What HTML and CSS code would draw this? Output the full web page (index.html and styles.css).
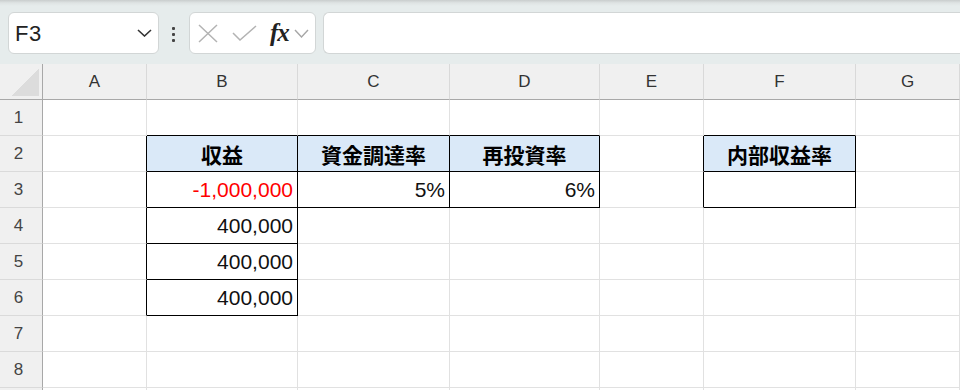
FILE: index.html
```
<!DOCTYPE html>
<html lang="ja">
<head>
    <meta charset="UTF-8">
    <title>内部収益率</title>
    <link rel="stylesheet" href="styles.css">
</head>
<body>
    <!-- Formula bar -->
    <div class="toolbar">
        <div class="namebox">
            <span class="name">F3</span>
            <svg class="chev" width="15" height="8" viewBox="0 0 15 8"><polyline points="1,1 7.5,7 14,1" fill="none" stroke="#333" stroke-width="1.6"/></svg>
        </div>
        <div class="dots"><i></i><i></i><i></i></div>
        <div class="fxbox">
            <svg width="20" height="19" viewBox="0 0 20 19"><path d="M1 1 L19 18 M19 1 L1 18" stroke="#b3b3b3" stroke-width="1.5" fill="none"/></svg>
            <svg class="ok" width="25" height="16" viewBox="0 0 25 16"><polyline points="1,8 8,15 24,1" stroke="#b3b3b3" stroke-width="1.5" fill="none"/></svg>
            <span class="fx">fx</span>
            <svg width="15" height="9" viewBox="0 0 15 9"><polyline points="1,1 7.5,8 14,1" fill="none" stroke="#a6a6a6" stroke-width="1.4"/></svg>
        </div>
        <div class="formula"></div>
    </div>

    <!-- Sheet -->
    <table class="sheet">
        <thead>
            <tr>
                <th class="corner"><span class="tri"></span></th>
                <th class="w-a">A</th>
                <th class="w-b">B</th>
                <th class="w-c">C</th>
                <th class="w-d">D</th>
                <th class="w-e">E</th>
                <th class="w-f">F</th>
                <th class="w-g">G</th>
            </tr>
        </thead>
        <tbody>
            <tr>
                <td class="rh">1</td>
                <td></td><td class="kb"></td><td class="kb"></td><td class="kb"></td><td></td><td class="kb"></td><td></td>
            </tr>
            <tr>
                <td class="rh">2</td>
                <td class="kr"></td>
                <td class="k head">収益</td>
                <td class="k head">資金調達率</td>
                <td class="k head">再投資率</td>
                <td class="kr"></td>
                <td class="k head">内部収益率</td>
                <td></td>
            </tr>
            <tr>
                <td class="rh">3</td>
                <td class="kr"></td>
                <td class="k num neg">-1,000,000</td>
                <td class="k num">5%</td>
                <td class="k num">6%</td>
                <td class="kr"></td>
                <td class="k"></td>
                <td></td>
            </tr>
            <tr>
                <td class="rh">4</td>
                <td class="kr"></td><td class="k num">400,000</td><td></td><td></td><td></td><td></td><td></td>
            </tr>
            <tr>
                <td class="rh">5</td>
                <td class="kr"></td><td class="k num">400,000</td><td></td><td></td><td></td><td></td><td></td>
            </tr>
            <tr>
                <td class="rh">6</td>
                <td class="kr"></td><td class="k num">400,000</td><td></td><td></td><td></td><td></td><td></td>
            </tr>
            <tr>
                <td class="rh">7</td>
                <td></td><td></td><td></td><td></td><td></td><td></td><td></td>
            </tr>
            <tr>
                <td class="rh">8</td>
                <td></td><td></td><td></td><td></td><td></td><td></td><td></td>
            </tr>
            <tr>
                <td class="rh"></td>
                <td></td><td></td><td></td><td></td><td></td><td></td><td></td>
            </tr>
        </tbody>
    </table>
</body>
</html>
```

FILE: styles.css
```
/* Page */
body {
    margin: 0;
    background: #ffffff;
    font-family: "Liberation Sans", Arial, sans-serif;
    overflow: hidden;
    width: 960px;
    height: 390px;
}

/* Formula bar */
.toolbar {
    display: flex;
    align-items: flex-start;
    height: 64px;
    box-sizing: border-box;
    padding: 12px 0 0 8px;
    background: linear-gradient(to bottom, #c9cdcd 0, #dfe4e4 3px, #e6ecec 6px);
}

.namebox,
.fxbox,
.formula {
    height: 42px;
    box-sizing: border-box;
    background: #fff;
    border: 1px solid #d2d6d6;
    border-radius: 6px;
    display: flex;
    align-items: center;
}

.namebox {
    width: 151px;
    padding: 0 6px;
    justify-content: space-between;
}

.name {
    font-size: 22px;
    color: #222;
    letter-spacing: 0.5px;
    padding-top: 2px;
}

.dots {
    display: flex;
    flex-direction: column;
    gap: 3px;
    margin: 15px 14px 0 13px;
}

.dots i {
    width: 3px;
    height: 3px;
    background: #444;
    border-radius: 1px;
}

.fxbox {
    width: 127px;
    padding: 0 0 0 8px;
}

.fxbox .ok {
    margin-left: 14px;
}

.fx {
    font-family: "Liberation Serif", "Times New Roman", serif;
    font-style: italic;
    font-weight: bold;
    font-size: 25px;
    color: #222;
    margin: 0 5px 0 13px;
    letter-spacing: -1px;
}

.formula {
    flex: 1;
    margin-left: 7px;
    border-right: none;
    border-radius: 6px 0 0 6px;
}

/* Sheet grid */
.sheet {
    border-collapse: separate;
    border-spacing: 0;
    table-layout: fixed;
    width: 960px;
}

.sheet th,
.sheet td {
    box-sizing: border-box;
    height: 36px;
    padding: 0;
    border-right: 1px solid #e1e1e1;
    border-bottom: 1px solid #e1e1e1;
    font-weight: normal;
}

.sheet th {
    background: #f0f0f0;
    color: #333;
    font-size: 17px;
    border-right-color: #d9d9d9;
    border-bottom-color: #a8a8a8;
    padding-top: 1px;
}

.sheet th.corner {
    width: 43px;
    text-align: right;
    vertical-align: bottom;
    border-right-color: #a8a8a8;
}

.tri {
    display: inline-block;
    width: 27px;
    height: 27px;
    margin: 0 3px 3px 0;
    background: linear-gradient(to bottom right, transparent 50%, #dcdcdc 50%);
    vertical-align: bottom;
}

.w-a { width: 104px; }
.w-b { width: 151px; }
.w-c { width: 152px; }
.w-d { width: 150px; }
.w-e { width: 104px; }
.w-f { width: 152px; }
.w-g { width: 104px; }

.sheet td.rh {
    background: #f0f0f0;
    color: #444;
    font-size: 17px;
    text-align: center;
    padding-right: 5px;
    border-right-color: #a8a8a8;
    border-bottom-color: #dadada;
}

/* Black cell borders */
.sheet td.k {
    border-right-color: #000;
    border-bottom-color: #000;
}

.sheet td.kb {
    border-bottom-color: #000;
}

.sheet td.kr {
    border-right-color: #000;
}

.sheet td.head {
    background: #dae9f8;
    font-family: "Noto Sans CJK JP", sans-serif;
    font-weight: bold;
    font-size: 21px;
    text-align: center;
    color: #000;
}

.sheet td.num {
    font-size: 21px;
    text-align: right;
    padding-right: 4px;
    color: #111;
}

.sheet td.neg {
    color: #ff0000;
}
```
